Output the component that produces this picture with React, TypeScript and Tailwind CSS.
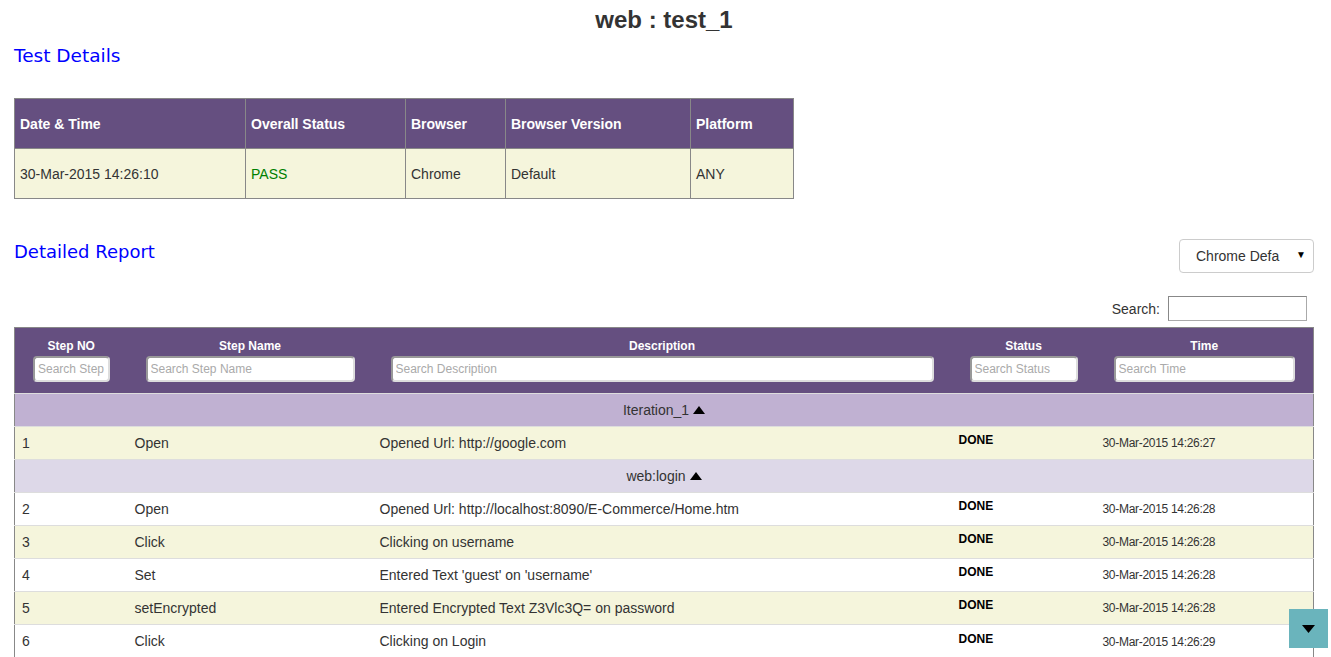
import React from "react";

const rows = [
  { kind: "group", label: "Iteration_1", bg: "bg-[#c0b1d2]" },
  { kind: "step", no: "1", name: "Open", desc: "Opened Url: http://google.com", time: "30-Mar-2015 14:26:27", bg: "bg-[#f5f5dc]" },
  { kind: "group", label: "web:login", bg: "bg-[#ddd8e8]" },
  { kind: "step", no: "2", name: "Open", desc: "Opened Url: http://localhost:8090/E-Commerce/Home.htm", time: "30-Mar-2015 14:26:28", bg: "bg-white" },
  { kind: "step", no: "3", name: "Click", desc: "Clicking on username", time: "30-Mar-2015 14:26:28", bg: "bg-[#f5f5dc]" },
  { kind: "step", no: "4", name: "Set", desc: "Entered Text 'guest' on 'username'", time: "30-Mar-2015 14:26:28", bg: "bg-white" },
  { kind: "step", no: "5", name: "setEncrypted", desc: "Entered Encrypted Text Z3Vlc3Q= on password", time: "30-Mar-2015 14:26:28", bg: "bg-[#f5f5dc]" },
  { kind: "step", no: "6", name: "Click", desc: "Clicking on Login", time: "30-Mar-2015 14:26:29", bg: "bg-white" },
];

const headCols = [
  { label: "Step NO", ph: "Search Step", w: "w-[113px]" },
  { label: "Step Name", ph: "Search Step Name", w: "w-[245px]" },
  { label: "Description", ph: "Search Description", w: "w-[579px]" },
  { label: "Status", ph: "Search Status", w: "w-[144px]" },
  { label: "Time", ph: "Search Time", w: "w-[218px]" },
];

function TriUp() {
  return (
    <svg width="12" height="8" viewBox="0 0 12 8" className="inline-block ml-[4px] align-[1px]">
      <path d="M6 0 L12 8 L0 8 Z" fill="#000" />
    </svg>
  );
}

export default function App() {
  return (
    <div className="min-h-[657px] bg-white font-['Liberation_Sans',Arial,sans-serif] text-[#333] text-sm pl-[14px] pr-[17px]">
      {/* title */}
      <h1 className="text-center text-[24px] leading-[28px] font-bold text-[#333] pt-[6px]">web : test_1</h1>

      <h2 className="font-['DejaVu_Sans',Verdana,sans-serif] text-[18.5px] leading-[22px] text-[#0000ff] mt-[11px]">
        Test Details
      </h2>

      {/* summary table */}
      <table className="mt-[31px] border-collapse border border-[#888]">
        <thead>
          <tr className="h-[50px] bg-[#654f80] text-white font-bold text-left">
            <th className="w-[231px] border border-[#888] px-[5px] text-left">Date &amp; Time</th>
            <th className="w-[160px] border border-[#888] px-[5px] text-left">Overall Status</th>
            <th className="w-[100px] border border-[#888] px-[5px] text-left">Browser</th>
            <th className="w-[185px] border border-[#888] px-[5px] text-left">Browser Version</th>
            <th className="w-[103px] border border-[#888] px-[5px] text-left">Platform</th>
          </tr>
        </thead>
        <tbody>
          <tr className="h-[50px] bg-[#f5f5dc]">
            <td className="border border-[#888] px-[5px]">30-Mar-2015 14:26:10</td>
            <td className="border border-[#888] px-[5px] text-[#008000]">PASS</td>
            <td className="border border-[#888] px-[5px]">Chrome</td>
            <td className="border border-[#888] px-[5px]">Default</td>
            <td className="border border-[#888] px-[5px]">ANY</td>
          </tr>
        </tbody>
      </table>

      {/* detailed report header */}
      <div className="flex items-start justify-between mt-[40px]">
        <h2 className="font-['DejaVu_Sans',Verdana,sans-serif] text-[18px] leading-[22px] text-[#0000ff] mt-[2px]">
          Detailed Report
        </h2>
        <div className="relative w-[135px] h-[34px] border border-[#ccc] rounded-[4px] flex items-center">
          <span className="pl-[16px] text-[14px] text-[#333]">Chrome Defa</span>
          <span className="absolute right-[7px] top-[8px] text-[10px] text-black">▼</span>
        </div>
      </div>

      <div className="flex justify-end items-center mt-[23px] pr-[7px]">
        <span className="text-[14px] mr-[8px]">Search:</span>
        <input className="w-[139px] h-[25px] border border-[#aaa] border-t-[#888] border-l-[#888] outline-none" />
      </div>

      {/* main table */}
      <table className="mt-[6px] border-collapse w-[1299px] border-l border-r border-[#888] table-fixed">
        <thead>
          <tr className="bg-[#654f80] border-t border-[#888]">
            {headCols.map((c) => (
              <th key={c.label} className={`${c.w} px-[18px] pt-[11px] pb-[11px] text-center align-top`}>
                <div className="text-white font-bold text-[12px] leading-[14px]">{c.label}</div>
                <input
                  placeholder={c.ph}
                  className="mt-[3px] w-full h-[26px] bg-white rounded-[4px] border-2 border-[#ddd] border-t-[#999] border-l-[#999] px-[3px] text-[12px] font-normal placeholder:text-[#aaa] outline-none"
                />
              </th>
            ))}
          </tr>
        </thead>
        <tbody>
          {rows.map((r, i) =>
            r.kind === "group" ? (
              <tr key={i} className={`${r.bg} h-[33px]`}>
                <td colSpan={5} className="text-center text-[14px] text-[#333] border-t border-[#ddd]">
                  {r.label}
                  <TriUp />
                </td>
              </tr>
            ) : (
              <tr key={i} className={`${r.bg} h-[33px] border-t border-[#ddd]`}>
                <td className="pl-[7px] text-[14px]">{r.no}</td>
                <td className="pl-[7px] text-[14px]">{r.name}</td>
                <td className="pl-[7px] text-[14px]">{r.desc}</td>
                <td className="pl-[7px] text-[12px] font-bold text-black">
                  <span className="block mb-[4px]">DONE</span>
                </td>
                <td className="pl-[7px] text-[12px] text-[#333] tracking-[-0.3px]">
                  <span className="block mt-[2px]">{r.time}</span>
                </td>
              </tr>
            )
          )}
        </tbody>
      </table>

      {/* scroll to bottom button */}
      <button className="fixed right-[3px] bottom-[9px] w-[39px] h-[39px] bg-[#6ab4bc] flex items-center justify-center">
        <svg width="13" height="8" viewBox="0 0 13 8">
          <path d="M0 0 L13 0 L6.5 8 Z" fill="#000" />
        </svg>
      </button>
    </div>
  );
}
